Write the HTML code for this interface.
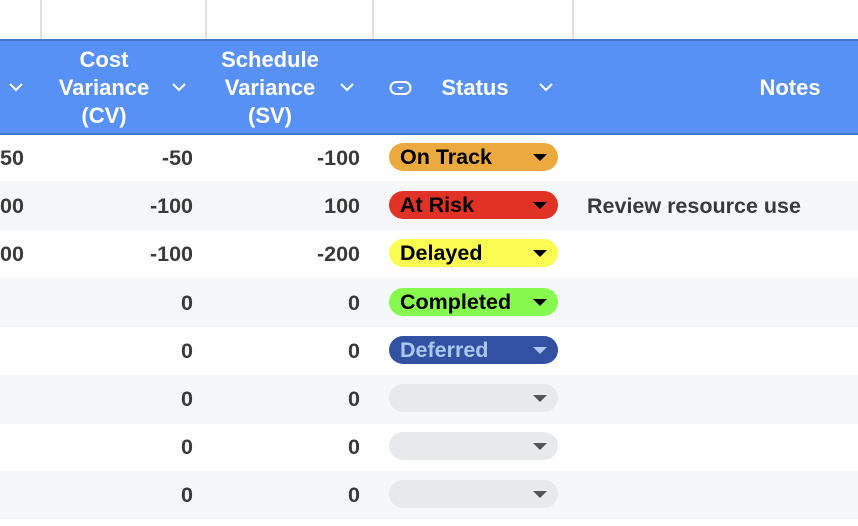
<!DOCTYPE html>
<html><head><style>
body{margin:0;width:858px;height:526px;overflow:hidden;background:#fff;font-family:"Liberation Sans",Arial,sans-serif;font-weight:bold;position:relative}
.a{position:absolute}
.vl{position:absolute;top:0;height:39px;width:2px;background:#e0e0e0}
.hdr{position:absolute;left:0;top:39px;width:858px;height:96px;background:#5891f5;border-top:2px solid #4a78c8;border-bottom:2px solid #4a78c8;box-sizing:border-box}
.ht{position:absolute;color:#fff;font-size:22px;line-height:28px;text-align:center}
.row{position:absolute;left:0;width:858px}
.g{background:#f6f7f9}
.n{position:absolute;font-size:21.5px;color:#3a3a3a;text-align:right;line-height:24px}
.pill{position:absolute;left:389px;width:169px;height:28px;border-radius:14px;font-size:21.5px;line-height:29px;box-sizing:border-box;padding-left:11px;color:#000}
.pill:after{content:"";position:absolute;right:11px;top:11px;border-left:7px solid transparent;border-right:7px solid transparent;border-top:7px solid currentColor}
.e{background:#e8e9eb;color:#555}
</style></head><body>
<div class="vl" style="left:40px"></div><div class="vl" style="left:205px"></div><div class="vl" style="left:372px"></div><div class="vl" style="left:572px"></div>
<div class="hdr"></div>
<svg class="a" style="left:8px;top:81px" width="16" height="12"><path d="M2 3l6 6 6-6" stroke="#fff" stroke-width="2" fill="none"/></svg>
<svg class="a" style="left:171px;top:81px" width="16" height="12"><path d="M2 3l6 6 6-6" stroke="#fff" stroke-width="2" fill="none"/></svg>
<svg class="a" style="left:339px;top:81px" width="16" height="12"><path d="M2 3l6 6 6-6" stroke="#fff" stroke-width="2" fill="none"/></svg>
<svg class="a" style="left:538px;top:81px" width="16" height="12"><path d="M2 3l6 6 6-6" stroke="#fff" stroke-width="2" fill="none"/></svg>
<svg class="a" style="left:389px;top:80px" width="24" height="16"><rect x="1.5" y="2" width="20" height="12" rx="6" stroke="#fff" stroke-width="2" fill="none"/><path d="M8 7h7l-3.5 3z" fill="#fff"/></svg>
<div class="ht" style="left:39px;width:130px;top:46px">Cost<br>Variance<br>(CV)</div>
<div class="ht" style="left:200px;width:140px;top:46px">Schedule<br>Variance<br>(SV)</div>
<div class="ht" style="left:425px;width:100px;top:74px">Status</div>
<div class="ht" style="left:740px;width:100px;top:74px">Notes</div>

<div class="row g" style="top:181px;height:49px"></div>
<div class="row g" style="top:278px;height:49px"></div>
<div class="row g" style="top:375px;height:49px"></div>
<div class="row g" style="top:471px;height:48px"></div>

<div class="n" style="left:0;top:146px;text-align:left">50</div>
<div class="n" style="left:0;top:194px;text-align:left">00</div>
<div class="n" style="left:0;top:242px;text-align:left">00</div>

<div class="n" style="left:93px;width:100px;top:146px">-50</div>
<div class="n" style="left:93px;width:100px;top:194px">-100</div>
<div class="n" style="left:93px;width:100px;top:242px">-100</div>
<div class="n" style="left:93px;width:100px;top:291px">0</div>
<div class="n" style="left:93px;width:100px;top:339px">0</div>
<div class="n" style="left:93px;width:100px;top:387px">0</div>
<div class="n" style="left:93px;width:100px;top:435px">0</div>
<div class="n" style="left:93px;width:100px;top:483px">0</div>

<div class="n" style="left:260px;width:100px;top:146px">-100</div>
<div class="n" style="left:260px;width:100px;top:194px">100</div>
<div class="n" style="left:260px;width:100px;top:242px">-200</div>
<div class="n" style="left:260px;width:100px;top:291px">0</div>
<div class="n" style="left:260px;width:100px;top:339px">0</div>
<div class="n" style="left:260px;width:100px;top:387px">0</div>
<div class="n" style="left:260px;width:100px;top:435px">0</div>
<div class="n" style="left:260px;width:100px;top:483px">0</div>

<div class="pill" style="top:143px;background:#eba93e">On Track</div>
<div class="pill" style="top:191px;background:#e03325">At Risk</div>
<div class="pill" style="top:239px;background:#fbfc51">Delayed</div>
<div class="pill" style="top:288px;background:#87fa4f">Completed</div>
<div class="pill" style="top:336px;background:#3351a3;color:#a9c8f3">Deferred</div>
<div class="pill e" style="top:384px"></div>
<div class="pill e" style="top:432px"></div>
<div class="pill e" style="top:480px"></div>

<div class="n" style="left:587px;top:194px;text-align:left">Review resource use</div>
</body></html>
